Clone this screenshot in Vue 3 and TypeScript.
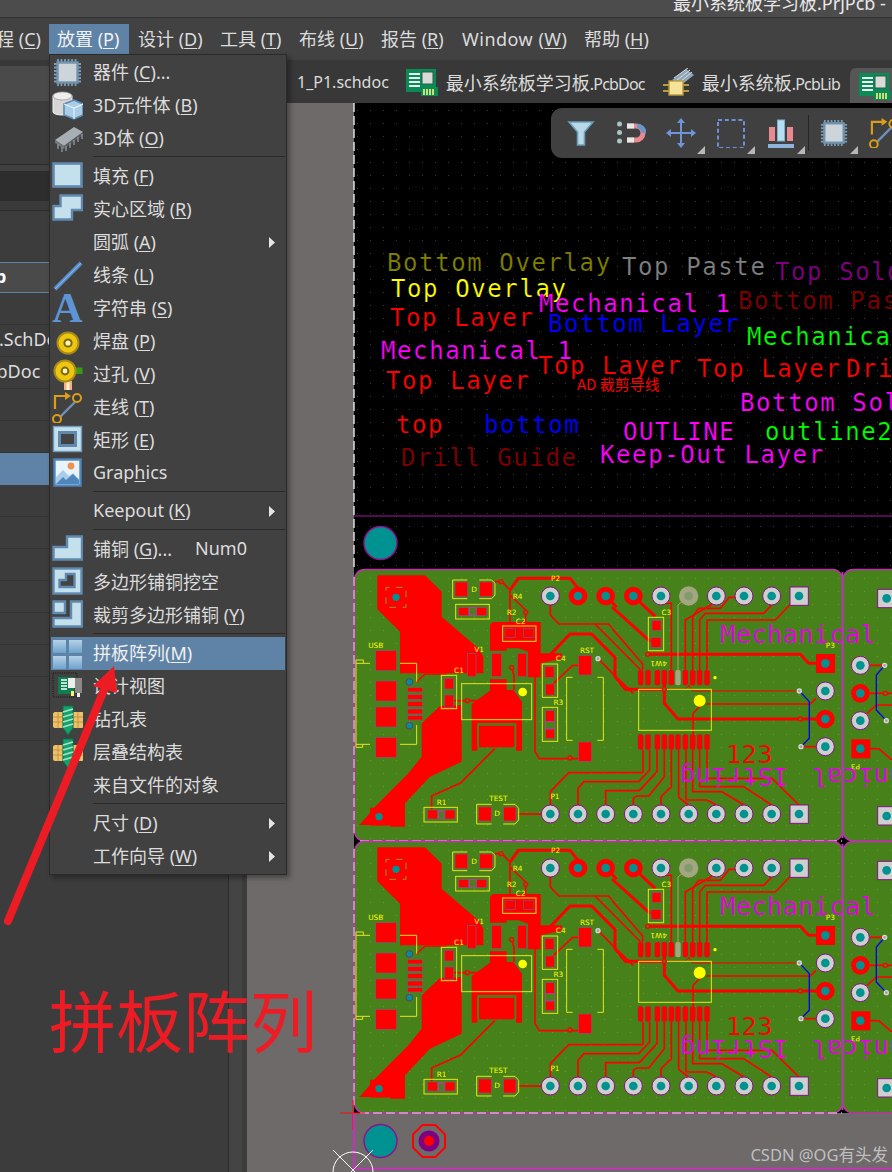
<script setup lang="ts">
interface MenuItem { sep?: boolean; icon?: string; a?: string; u?: string; b?: string; sub?: boolean; hot?: boolean; key?: string }

const menuBar = [
  { a: '程 (', u: 'C', b: ')', cls: 'first' },
  { a: '放置 (', u: 'P', b: ')', cls: 'open' },
  { a: '设计 (', u: 'D', b: ')', cls: '' },
  { a: '工具 (', u: 'T', b: ')', cls: '' },
  { a: '布线 (', u: 'U', b: ')', cls: '' },
  { a: '报告 (', u: 'R', b: ')', cls: '' },
  { a: 'Window (', u: 'W', b: ')', cls: 'wide' },
  { a: '帮助 (', u: 'H', b: ')', cls: '' }
]

const pinsH = 'M6 2V5M9.5 2V5M13 2V5M16.5 2V5M20 2V5M23.5 2V5M6 26V29M9.5 26V29M13 26V29M16.5 26V29M20 26V29M23.5 26V29M2 7V7M2 7H5M2 10.5H5M2 14H5M2 17.5H5M2 21H5M2 24.5H5M26 7H29M26 10.5H29M26 14H29M26 17.5H29M26 21H29M26 24.5H29'
const chip = `<path d="${pinsH}" stroke="#7c9db5" stroke-width="1.8" fill="none"/><rect x="5.5" y="5.5" width="20" height="20" fill="#cdd5db" stroke="#6f92ad" stroke-width="2.4"/>`

const icons: Record<string, string> = {
  chip,
  body3d: `<path d="M1 6C1 2 20 2 20 6V22C20 26 1 26 1 22Z" fill="#d6d6d6" stroke="#f2f2f2" stroke-width="1"/><ellipse cx="10.5" cy="6" rx="9.5" ry="4" fill="#eee" stroke="#9a9a9a" stroke-width=".8"/><path d="M12 14L22 10L31 14V25L22 29L12 25Z" fill="#a9cde6" stroke="#5d8bb0" stroke-width="1.6"/><path d="M12 14L22 18L31 14M22 18V29" fill="none" stroke="#e2f1fa" stroke-width="1.2"/>`,
  ic3d: `<path d="M3 17L22 4L31 9L12 23Z" fill="#a7aeb4"/><path d="M3 17L12 23V26L3 20Z" fill="#70767c"/><path d="M12 23L31 9V12L12 26Z" fill="#565c62"/><path d="M6 21V26M10 24V29M14 23V28M18 20V25M22 17V22M26 14V19M30 11V16" stroke="#8d949a" stroke-width="1.4" fill="none"/>`,
  fill: `<rect x="1.5" y="2.5" width="28" height="23" fill="#c3e0ec" stroke="#6189ae" stroke-width="2.6"/>`,
  region: `<path d="M8.5 1.5H30V16H20V25.5H1.5V12H8.5Z" fill="#c3e0ec" stroke="#6189ae" stroke-width="2.4"/>`,
  none: '',
  line: `<path d="M3 29L29 3" stroke="#5b90cf" stroke-width="4"/><path d="M3 29L29 3" stroke="#89b5e6" stroke-width="1"/>`,
  text: `<text x="15.5" y="29" class="ia">A</text>`,
  pad: `<circle cx="16" cy="17" r="10.5" fill="#edc70e" stroke="#a98b1c" stroke-width="2"/><circle cx="16" cy="17" r="3.6" fill="#fff3b0" stroke="#7b6414" stroke-width="2"/>`,
  via: `<rect x="22" y="8.5" width="8.5" height="6.5" fill="#3b9a12"/><rect x="12" y="22" width="8" height="9" fill="#eeb27a"/><rect x="14.5" y="22" width="3" height="9" fill="#fff0d8"/><circle cx="13" cy="12" r="10.5" fill="#edc70e" stroke="#a98b1c" stroke-width="2"/><circle cx="13" cy="12" r="3.4" fill="#fff3b0" stroke="#7b6414" stroke-width="2"/>`,
  route: `<path d="M3 17V4H14" fill="none" stroke="#dd9e17" stroke-width="2.2"/><path d="M13 0L19 4L13 8Z" fill="#dd9e17"/><path d="M8 25L23 10" stroke="#7091b8" stroke-width="2.4"/><circle cx="25" cy="6" r="4" fill="#3d3d3d" stroke="#dd9e17" stroke-width="2"/><circle cx="5" cy="27" r="4" fill="#3d3d3d" stroke="#dd9e17" stroke-width="2"/>`,
  rect: `<rect x="1.5" y="1.5" width="28" height="25" fill="#c3e0ec" stroke="#c3e0ec"/><rect x="1.5" y="1.5" width="28" height="25" fill="none" stroke="#6f9abd" stroke-width="1.4"/><rect x="7.5" y="7.5" width="16" height="13" fill="#434343" stroke="#6189ae" stroke-width="3"/>`,
  graphics: `<rect x="2.5" y="1.5" width="26" height="26" fill="#e8f3fb" stroke="#4f86bd" stroke-width="2.4"/><path d="M4 26V19L11 12L17 18L21 15L27 21V26Z" fill="#a8cde9"/><path d="M4 26L11 19L14 22L21 16L27 22V26Z" fill="#4f86bd"/><circle cx="19" cy="8" r="3.4" fill="#ea9450"/>`,
  poly: `<path d="M1.5 25.5V13H15V2.5H30V25.5Z" fill="#c3e0ec" stroke="#6189ae" stroke-width="2.4"/>`,
  cutout: `<rect x="1.5" y="1.5" width="28" height="25" fill="#c3e0ec" stroke="#6189ae" stroke-width="2.4"/><path d="M7.5 20V13H14V7H22.5V20Z" fill="#434343" stroke="#6189ae" stroke-width="2.4"/>`,
  slice: `<path d="M1.5 1.5H13V13H1.5Z" fill="#c3e0ec" stroke="#6189ae" stroke-width="2.4"/><path d="M19 1.5H30V26.5H1.5V18H19Z" fill="#c3e0ec" stroke="#6189ae" stroke-width="2.4"/>`,
  array: `<defs><linearGradient id="ag" x1="0" y1="0" x2="0" y2="1"><stop offset="0" stop-color="#b5d2e6"/><stop offset="1" stop-color="#6ea3cd"/></linearGradient></defs><rect x="1" y="2" width="13" height="13" fill="url(#ag)"/><rect x="17" y="2" width="13" height="13" fill="url(#ag)"/><rect x="1" y="18" width="13" height="13" fill="url(#ag)"/><rect x="17" y="18" width="13" height="13" fill="url(#ag)"/>`,
  view: `<rect x="1" y="2" width="24" height="24" fill="none" stroke="#111" stroke-dasharray="1 1.2"/><rect x="6" y="6" width="16" height="17" fill="#0d7d52"/><path d="M9 9H15M9 12H15M9 15H15M9 18H15" stroke="#fff" stroke-width="1.4"/><rect x="16" y="7" width="7" height="10" fill="#eee"/><rect x="23" y="7" width="7" height="15" fill="#8a8a8a"/><rect x="19" y="20" width="3" height="5" fill="#fff36a"/><rect x="25" y="22" width="3" height="4" fill="#eee"/>`,
  drill: `<path d="M3 8H30C31 8 31.500 9 31.500 10V22C31.500 23 31 24 30 24H3C2 24 1 23 1 22V10C1 9 2 8 3 8Z" fill="#eec169"/><path d="M1 13H31M1 18H31M6 8V24M11 8V24M21 8V24M26 8V24" stroke="#b88a3a" stroke-width=".8" fill="none"/><path d="M11 2H21V24L16 31L11 24Z" fill="#18a06c" stroke="#0d7048"/><path d="M11 8L21 5M11 13L21 10M11 18L21 15M11 23L21 20" stroke="#a3e6c8" stroke-width="1.4"/>`
}

const menu: MenuItem[] = [
  { icon: 'chip', a: '器件 (', u: 'C', b: ')...' },
  { icon: 'body3d', a: '3D元件体 (', u: 'B', b: ')' },
  { icon: 'ic3d', a: '3D体 (', u: 'O', b: ')' },
  { sep: true },
  { icon: 'fill', a: '填充 (', u: 'F', b: ')' },
  { icon: 'region', a: '实心区域 (', u: 'R', b: ')' },
  { icon: 'none', a: '圆弧 (', u: 'A', b: ')', sub: true },
  { icon: 'line', a: '线条 (', u: 'L', b: ')' },
  { icon: 'text', a: '字符串 (', u: 'S', b: ')' },
  { icon: 'pad', a: '焊盘 (', u: 'P', b: ')' },
  { icon: 'via', a: '过孔 (', u: 'V', b: ')' },
  { icon: 'route', a: '走线 (', u: 'T', b: ')' },
  { icon: 'rect', a: '矩形 (', u: 'E', b: ')' },
  { icon: 'graphics', a: 'Grap', u: 'h', b: 'ics' },
  { sep: true },
  { icon: 'none', a: 'Keepout (', u: 'K', b: ')', sub: true },
  { sep: true },
  { icon: 'poly', a: '铺铜 (', u: 'G', b: ')...', key: 'Num0' },
  { icon: 'cutout', a: '多边形铺铜挖空' },
  { icon: 'slice', a: '裁剪多边形铺铜 (', u: 'Y', b: ')' },
  { sep: true },
  { icon: 'array', a: '拼板阵列(', u: 'M', b: ')', hot: true },
  { icon: 'view', a: '设计视图' },
  { icon: 'drill', a: '钻孔表' },
  { icon: 'drill', a: '层叠结构表' },
  { icon: 'none', a: '来自文件的对象' },
  { sep: true },
  { icon: 'none', a: '尺寸 (', u: 'D', b: ')', sub: true },
  { icon: 'none', a: '工作向导 (', u: 'W', b: ')', sub: true }
]

const rowList = Array.from({ length: 14 }, (_, i) => i)

const legend = [
  { t: 'Bottom Overlay', x: 387, y: 271, c: '#808000' },
  { t: 'Top Paste', x: 622, y: 275, c: '#808080' },
  { t: 'Top Solder', x: 775, y: 280, c: '#800080' },
  { t: 'Top Overlay', x: 391, y: 297, c: '#ffff00' },
  { t: 'Mechanical 1', x: 539, y: 312, c: '#ff00ff' },
  { t: 'Bottom Paste', x: 738, y: 309, c: '#800000' },
  { t: 'Top Layer', x: 390, y: 326, c: '#ff0000' },
  { t: 'Bottom Layer', x: 548, y: 332, c: '#0000ff' },
  { t: 'Mechanical 2', x: 747, y: 345, c: '#00ff00' },
  { t: 'Mechanical 1', x: 381, y: 359, c: '#ff00ff' },
  { t: 'Top Layer', x: 538, y: 374, c: '#ff0000' },
  { t: 'Top Layer', x: 697, y: 377, c: '#ff0000' },
  { t: 'Drill Drawing', x: 846, y: 377, c: '#ff0000' },
  { t: 'Top Layer', x: 386, y: 389, c: '#ff0000' },
  { t: 'Bottom Solder', x: 740, y: 411, c: '#ff00ff' },
  { t: 'top', x: 396, y: 433, c: '#ff0000' },
  { t: 'bottom', x: 484, y: 433, c: '#0000ff' },
  { t: 'OUTLINE', x: 623, y: 440, c: '#ff00ff' },
  { t: 'outline2', x: 765, y: 440, c: '#00ff00' },
  { t: 'Drill Guide', x: 401, y: 466, c: '#800000' },
  { t: 'Keep-Out Layer', x: 600, y: 463, c: '#ff00ff' }
]

const boardRows = [0, 272]
const botPads = [0, 1, 2, 3, 4, 5, 6, 7, 8].map((k) => 601 + 83 * k)

const traces = [
  'M435 65H455L480 90V190', 'M480 105L527 150V190',
  'M601 135V165L627 192H735L786 243', 'M735 192H775L786 203',
  'M744 296L800 352L850 400', 'M600 380L668 316H685', 'M555 330V575L568 596H685', 'M300 422H400',
  'M245 750V708L333 668L435 565', 'M505 762H575', 'M601 735V695L656 638H840', 'M684 735V685L702 665H840',
  'M767 735V692H840', 'M485 323L492 345V390', 'M200 365L225 342H290'
]
const thick = ['M480 90L505 55H660L684 85', 'M600 285L660 222H725L795 292V350L826 388H840', 'M767 108L800 141']
const tracesR = [
  'M54 638H93V570', 'M54 665H80L113 630V570', 'M54 692H82L135 635V570', 'M64 735V715L75 708H110L157 650V570',
  'M147 735V710L178 680V570', 'M230 735L200 712V570', 'M313 735L285 720H222V570', 'M396 735L330 695H242V570',
  'M479 735L395 680H263V570', 'M561 735L480 655H285V570', 'M147 130H178V330', 'M313 125L220 180V330',
  'M396 112H352L325 145H260L242 170V330', 'M479 135L455 160H280L263 180V330', 'M561 108L533 135L490 180H285V330',
  'M0 205L92 312V330', 'M0 243L86 330', 'M283 432H595L612 415', 'M243 570V460L270 432', 'M612 560H570',
  'M774 316H818', 'M745 400H840', 'M765 460L793 435H840', 'M774 566H800L840 600'
]
const thickR = ['M0 141L115 245', 'M64 108L130 170', 'M40 388H155', 'M157 330V430L198 477H612', 'M107 283H565L590 310H612']
const thinR = 'M155 388H218L240 370M230 375L240 393H555'

const silk = [
  'M18 310H60M18 553H60M18 300H40V310M18 300V562H38V553M150 310H200V365M150 553H200V495',
  'M352 60H308V116H352M388 60H425L435 70V105L425 116H388',
  'M425 733H380V792H425M460 733H495L506 745V780L495 792H460',
  'M668 352H650V541H668M742 352H760V541H742'
]
const boxes = [
  [317, 133, 101, 44], [458, 198, 100, 46], [274, 346, 46, 100], [335, 371, 210, 108],
  [577, 312, 46, 100], [577, 442, 46, 102], [222, 742, 100, 44], [895, 172, 46, 100], [866, 388, 218, 123]
]
const smd = [
  [77, 272, 63, 60], [77, 363, 63, 60], [77, 441, 63, 60], [77, 532, 63, 60],
  [172, 403, 46, 15], [172, 425, 46, 15], [172, 447, 46, 15], [172, 383, 46, 13], [172, 467, 46, 13],
  [315, 66, 38, 44], [389, 66, 38, 44], [325, 142, 30, 25], [380, 142, 30, 25],
  [465, 205, 32, 27], [520, 205, 32, 27], [283, 355, 28, 32], [283, 405, 28, 37],
  [585, 320, 27, 32], [587, 372, 26, 33], [587, 452, 26, 33], [587, 507, 26, 28],
  [685, 287, 40, 58], [685, 546, 40, 58], [232, 750, 30, 27], [285, 750, 30, 27],
  [386, 741, 38, 42], [460, 741, 38, 42], [352, 280, 26, 70], [425, 280, 30, 70], [502, 280, 28, 70],
  [906, 182, 27, 30], [903, 233, 30, 29]
]
const mags = [[358, 142, 20, 25], [265, 752, 17, 23], [587, 485, 26, 22]]
const labels = [
  { t: 'P2', x: 617, y: 62 }, { t: 'R4', x: 503, y: 118 }, { t: 'R2', x: 485, y: 164 }, { t: 'C2', x: 512, y: 192 },
  { t: 'USB', x: 77, y: 265 }, { t: 'V1', x: 387, y: 277 }, { t: 'RST', x: 711, y: 280 }, { t: 'C4', x: 632, y: 304 },
  { t: 'C1', x: 327, y: 340 }, { t: 'R3', x: 625, y: 436 }, { t: 'P1', x: 615, y: 716 }, { t: 'TEST', x: 445, y: 722 },
  { t: 'R1', x: 275, y: 736 }, { t: 'C3', x: 949, y: 165 }, { t: 'P3', x: 1441, y: 265 }, { t: 'D', x: 372, y: 95 }, { t: 'D', x: 441, y: 769 }
]
const pinXs = [86, 108, 136, 157, 178, 220, 242, 263, 285]
</script>

<template>
  <div class="page">
    <div class="title"><span class="title-text">最小系统板学习板.PrjPcb -</span></div>
    <nav class="menubar">
      <div v-for="m in menuBar" :key="m.u" class="mb-item" :class="m.cls"><span>{{ m.a }}<u>{{ m.u }}</u>{{ m.b }}</span></div>
    </nav>

    <div class="body">
      <aside class="panel">
        <div class="p-a"></div>
        <div class="p-b"></div>
        <div class="p-c"></div>
        <div class="p-d"></div>
        <div class="p-e"></div>
        <div class="p-f"></div>
        <div class="p-g"></div>
        <div class="p-head"><span>p</span></div>
        <div v-for="r in rowList" :key="r" class="p-row" :class="{ sel: r === 5 }">
          <span v-if="r === 1" class="sch">板.SchDoc</span>
          <span v-if="r === 2" class="pcb">PcbDoc</span>
        </div>
      </aside>

      <div class="work">
        <div class="tabs">
          <div class="tab">1_P1.schdoc</div>
          <div class="tab">
            <svg class="tab-ic" viewBox="0 0 32 28"><rect x="0" y="1" width="30" height="23" fill="#0c8a55"/><path d="M3 6H14M3 10H14M3 14H14M3 18H14" stroke="#e9fff4" stroke-width="1.8"/><rect x="16" y="4" width="11" height="12" fill="#d9dbd9" stroke="#2c5a46"/><rect x="15" y="19" width="17" height="9" fill="#0c8a55"/><path d="M18 21V27M21 21V27M24 21V27M27 21V27" stroke="#fff27a" stroke-width="1.6"/></svg>
            <span class="tight"><b class="zh">最小系统板学习板</b>.PcbDoc</span>
          </div>
          <div class="tab">
            <svg class="tab-ic" viewBox="0 0 32 28"><path d="M10 12L24 1L32 7L18 18Z" fill="#8fa4b5"/><path d="M12 10L26 0M15 12L28 2M18 14L30 4" stroke="#d6e0e8" stroke-width="1"/><rect x="7" y="13" width="14" height="14" fill="#f7e29a" stroke="#b79a3e" stroke-width="1.4"/><path d="M1 17H7M1 23H7M21 17H27M21 23H27" stroke="#b79a3e" stroke-width="2"/></svg>
            <span class="tight"><b class="zh">最小系统板</b>.PcbLib</span>
          </div>
          <div class="tab active">
            <svg class="tab-ic" viewBox="0 0 32 28"><rect x="0" y="1" width="30" height="23" fill="#0c8a55"/><path d="M3 6H14M3 10H14M3 14H14M3 18H14" stroke="#e9fff4" stroke-width="1.8"/><rect x="16" y="4" width="11" height="12" fill="#d9dbd9" stroke="#2c5a46"/><rect x="15" y="19" width="17" height="9" fill="#0c8a55"/><path d="M18 21V27M21 21V27M24 21V27M27 21V27" stroke="#fff27a" stroke-width="1.6"/></svg>
          </div>
        </div>

        <div class="stage">
          <div class="strip"></div>
          <div class="canvas">
            <svg class="board" viewBox="247 103 645 1069">
              <defs>
                <pattern id="dotsK" x="0" y="0" width="13" height="13" patternUnits="userSpaceOnUse"><rect x="6" y="6" width="1" height="1" fill="#3a3a3a" /></pattern>
                <pattern id="dotsG" x="0" y="0" width="13" height="13" patternUnits="userSpaceOnUse"><rect x="6" y="6" width="1" height="1" fill="#5f9a38" /></pattern>
              </defs>
              <rect x="354" y="103" width="538" height="1010" fill="#000" />
              <rect x="354" y="103" width="538" height="466" fill="url(#dotsK)" />
              <path d="M354 516H892" stroke="#a01ca0" stroke-width="1.2" />
              <circle cx="380.500" cy="543" r="16.500" fill="#009291" stroke="#8a148c" stroke-width="1.500" />

              <text v-for="(l, i) in legend" :key="i" class="layer" :x="l.x" :y="l.y" :fill="l.c">{{ l.t }}</text>
              <text x="577" y="390" class="ad">AD 裁剪导线</text>

              <g v-for="dy in boardRows" :key="dy" :transform="`translate(0 ${dy})`">
                <rect x="354.500" y="569.500" width="488" height="271.500" rx="10" fill="#47811a" stroke="#c030b0" stroke-width="1.500" />
                <rect x="356" y="571" width="485" height="268" rx="9" fill="url(#dotsG)" />
                <rect x="843" y="569.500" width="60" height="271.500" rx="10" fill="#47811a" stroke="#c030b0" stroke-width="1.500" />
                <rect x="845" y="571" width="60" height="268" rx="9" fill="url(#dotsG)" />
                <path d="M842.500 572V838" stroke="#a8419e" stroke-width="2" />

                <g transform="translate(350 560) scale(.33333)">
                  <!-- copper pours -->
                  <g class="pour">
                    <polygon points="82,46 225,46 275,95 275,170 385,265 400,290 400,340 150,340 150,215 82,148" />
                    <polygon points="420,195 428,186 572,186 572,280 635,280 635,296 572,310 572,352 534,352 534,275 505,265 470,265 470,272 420,272" />
                    <polygon points="420,358 470,358 470,390 490,390 516,425 516,572 498,572 498,490 382,490 382,572 365,572 365,432 420,392" />
                    <polygon points="270,438 335,435 335,605 240,650 165,730 165,800 120,800 118,795 28,795 50,770 80,735 175,640 215,590 215,490" />
                    <rect x="387" y="497" width="106" height="65" />
                  </g>
                  <path class="gap" d="M383 560V492H497V560" />

                  <path v-for="(d, i) in traces" :key="i" class="trace" :d="d" />
                  <path v-for="(d, i) in thick" :key="'k' + i" class="trace t-thick" :d="d" />
                  <g transform="translate(786 0)">
                    <path v-for="(d, i) in tracesR" :key="'r' + i" class="trace" :d="d" />
                    <path v-for="(d, i) in thickR" :key="'q' + i" class="trace t-thick" :d="d" />
                    <path class="trace t-thin" :d="thinR" />
                  </g>
                  <path class="trace-gray" d="M1016 108L984 135V330" />
                  <path class="trace-blue" d="M1348 393L1378 425V535L1353 560" />
                  <path class="trace-blue" d="M1604 316L1579 345V450L1609 482" />

                  <rect v-for="(p, i) in smd" :key="i" class="smd" :x="p[0]" :y="p[1]" :width="p[2]" :height="p[3]" />
                  <rect v-for="(p, i) in mags" :key="'m' + i" class="mag" :x="p[0]" :y="p[1]" :width="p[2]" :height="p[3]" />
                  <rect v-for="(b, i) in boxes" :key="'b' + i" class="box" :x="b[0]" :y="b[1]" :width="b[2]" :height="b[3]" />
                  <path v-for="(d, i) in silk" :key="'s' + i" class="box" :d="d" />
                  <rect x="108" y="82" width="60" height="60" class="bracket" />

                  <circle cx="138" cy="112" r="11" class="hole" />
                  <rect x="60" y="743" width="55" height="54" fill="#f00" />
                  <circle cx="87" cy="770" r="11" class="hole" />
                  <circle cx="178" cy="366" r="10" class="hole viah" />
                  <circle cx="178" cy="497" r="10" class="hole viah" />

                  <circle v-for="v in [[453, 65], [527, 157], [352, 422], [485, 323], [660, 594], [893, 283], [943, 388], [1351, 477], [1606, 400]]" :key="'v' + v[0]" class="via" :cx="v[0]" :cy="v[1]" r="6" />
                  <circle v-for="v in [[744, 296], [1348, 393], [1353, 560], [1604, 316], [1609, 482]]" :key="'g' + v[0]" class="via-g" :cx="v[0]" :cy="v[1]" r="6" />

                  <!-- connector pads, top row -->
                  <g>
                    <circle cx="601" cy="108" r="27" class="pad-g" /><circle cx="601" cy="108" r="13" class="hole" />
                    <circle cx="684" cy="108" r="28" class="pad-r" /><circle cx="684" cy="108" r="13" class="hole" />
                    <circle cx="767" cy="108" r="28" class="pad-r" /><circle cx="767" cy="108" r="13" class="hole" />
                    <circle cx="850" cy="108" r="28" class="pad-r" /><circle cx="850" cy="108" r="13" class="hole" />
                    <circle cx="933" cy="108" r="27" class="pad-g" /><circle cx="933" cy="108" r="13" class="hole" />
                    <circle cx="1016" cy="108" r="29" fill="#a4a581" /><circle cx="1016" cy="108" r="13" fill="#869a6f" />
                    <circle cx="1099" cy="108" r="27" class="pad-g" /><circle cx="1099" cy="108" r="13" class="hole" />
                    <circle cx="1182" cy="108" r="27" class="pad-g" /><circle cx="1182" cy="108" r="13" class="hole" />
                    <circle cx="1265" cy="108" r="27" class="pad-g" /><circle cx="1265" cy="108" r="13" class="hole" />
                    <rect x="1320" y="81" width="55" height="55" class="pad-g" /><circle cx="1347" cy="108" r="13" class="hole" />
                  </g>
                  <!-- bottom row -->
                  <g>
                    <template v-for="x in botPads" :key="x">
                      <circle :cx="x" cy="762" r="27" class="pad-g" /><circle :cx="x" cy="762" r="13" class="hole" />
                    </template>
                    <rect x="1320" y="735" width="55" height="55" class="pad-g" /><circle cx="1347" cy="762" r="13" class="hole" />
                  </g>
                  <!-- IC pins -->
                  <rect v-for="x in pinXs" :key="'pt' + x" class="pin" :x="x + 786 - 8" y="330" width="16" height="46" rx="6" />
                  <rect x="976" y="330" width="16" height="46" rx="6" fill="#a4a581" />
                  <rect v-for="x in [...pinXs, 198]" :key="'pb' + x" class="pin" :x="x + 786 - 8" y="523" width="16" height="46" rx="6" />

                  <circle cx="1049" cy="422" r="18" fill="#ffff00" />
                  <circle cx="1095" cy="353" r="5" fill="#ffff00" />
                  <circle cx="518" cy="396" r="13" fill="#ffff00" />

                  <!-- right connector -->
                  <rect x="1398" y="282" width="57" height="57" class="pad-r" /><circle cx="1426" cy="310" r="13" class="hole" />
                  <circle cx="1426" cy="393" r="27" class="pad-g" /><circle cx="1426" cy="393" r="13" class="hole" />
                  <circle cx="1426" cy="477" r="28" class="pad-r" /><circle cx="1426" cy="477" r="13" class="hole" />
                  <circle cx="1426" cy="560" r="27" class="pad-g" /><circle cx="1426" cy="560" r="13" class="hole" />

                  <!-- neighbouring board -->
                  <rect x="1583" y="88" width="55" height="55" class="pad-g" /><circle cx="1610" cy="115" r="13" class="hole" />
                  <circle cx="1531" cy="316" r="27" class="pad-g" /><circle cx="1531" cy="316" r="13" class="hole" />
                  <circle cx="1531" cy="400" r="28" class="pad-r" /><circle cx="1531" cy="400" r="13" class="hole" />
                  <circle cx="1531" cy="482" r="27" class="pad-g" /><circle cx="1531" cy="482" r="13" class="hole" />
                  <rect x="1504" y="538" width="57" height="57" class="pad-r" /><circle cx="1531" cy="566" r="13" class="hole" />
                  <rect x="1583" y="740" width="55" height="55" class="pad-g" /><circle cx="1610" cy="768" r="13" class="hole" />

                  <text v-for="(l, i) in labels" :key="'l' + i" class="tiny" :x="l.x" :y="l.y">{{ l.t }}</text>
                  <text class="tiny" transform="translate(1516 612) rotate(180)" x="0" y="0">P3</text>
                  <text class="tiny" transform="translate(926 304) rotate(180)" x="0" y="0">4W1</text>

                  <text class="big mech" x="1111" y="248">Mechanical</text>
                  <text class="big red" x="1128" y="608">123</text>
                  <text class="big mech" transform="translate(1316 624) rotate(180)">1String</text>
                  <text class="big mech" transform="translate(1851 624) rotate(180)">Mechanical</text>
                </g>

                <path d="M354 577V833" class="dash" />
                <path d="M360 841H842" class="dash" />
              </g>
              <path d="M354 103V569" class="dash dash-w" />

              <!-- below the boards -->
              <path d="M340 1113H365M353 1100V1130" stroke="#f01010" stroke-width="1" />
              <path d="M354 1113V1172M354 1168.500H892" stroke="#e020d8" stroke-width="1.600" />
              <circle cx="380.500" cy="1141" r="16.500" fill="#009291" stroke="#8a148c" stroke-width="1.500" />
              <polygon points="422.500,1125 435.500,1125 445,1134.500 445,1147.500 435.500,1157 422.500,1157 413,1147.500 413,1134.500" fill="none" stroke="#f00" stroke-width="2" />
              <circle cx="429" cy="1141" r="10.500" fill="#800080" />
              <circle cx="429" cy="1141" r="5" fill="#f00" />
              <circle cx="353" cy="1172" r="20" fill="none" stroke="#fff" stroke-width="1" />
              <path d="M333 1150L373 1190M373 1150L333 1190" stroke="#fff" stroke-width="1" />
            </svg>

            <div class="tools">
              <div class="tool">
                <svg viewBox="0 0 30 30"><path d="M3 4H27L18.500 14V27H11.500V14Z" fill="#b7d9e8" stroke="#6d9cb8" stroke-width="1.600" /></svg>
              </div>
              <div class="tool">
                <svg viewBox="0 0 30 30"><circle cx="3.500" cy="6" r="2.500" fill="#a9c4c4" /><circle cx="3.500" cy="14.500" r="2.500" fill="#a9c4c4" /><circle cx="3.500" cy="23" r="2.500" fill="#a9c4c4" /><path d="M11 8H20A7 7 0 0 1 20 22H11" fill="none" stroke="#e88a8f" stroke-width="5" /><path d="M11 8H18M11 22H18" stroke="#e8e8e8" stroke-width="5" /><path d="M21 8A7 7 0 0 1 21 22" fill="none" stroke="#6f94c8" stroke-width="5" stroke-dasharray="11 30"/></svg>
              </div>
              <div class="tool corner">
                <svg viewBox="0 0 30 30"><path d="M15 2V28M2 15H28" stroke="#6f94d8" stroke-width="2" /><path d="M15 0L19 5H11ZM15 30L11 25H19ZM0 15L5 11V19ZM30 15L25 19V11Z" fill="#6f94d8" /></svg>
              </div>
              <div class="tool corner">
                <svg viewBox="0 0 30 30"><rect x="2" y="2" width="26" height="28" fill="none" stroke="#6f8fd8" stroke-width="2" stroke-dasharray="4 2.800" /></svg>
              </div>
              <div class="tool corner">
                <svg viewBox="0 0 30 30"><rect x="3" y="9" width="6" height="14" fill="#e88a8f" /><rect x="11.500" y="2" width="7" height="21" fill="#b5def0" stroke="#7ab0d0" /><rect x="21" y="9" width="6" height="14" fill="#e88a8f" /><rect x="2" y="26" width="26" height="4" fill="#8fb4dc" /></svg>
              </div>
              <div class="tool-sep"></div>
              <div class="tool corner">
                <svg viewBox="0 0 31 31" v-html="icons.chip"></svg>
              </div>
              <div class="tool">
                <svg viewBox="0 0 31 31" v-html="icons.route"></svg>
              </div>
            </div>

            <div class="mark">CSDN @OG有头发</div>
          </div>
        </div>
      </div>
    </div>

    <!-- open dropdown -->
    <div class="menu">
      <template v-for="(m, i) in menu" :key="i">
        <div v-if="m.sep" class="sep"></div>
        <div v-else class="item" :class="{ hot: m.hot }">
          <svg class="ic" viewBox="0 0 31 31" v-html="icons[m.icon || 'none']"></svg>
          <span class="lbl" :class="{ haskey: m.key }">{{ m.a }}<u v-if="m.u">{{ m.u }}</u>{{ m.b }}</span>
          <span v-if="m.key" class="key">{{ m.key }}</span>
          <i v-if="m.sub" class="arrow"></i>
        </div>
      </template>
    </div>

    <!-- red annotation -->
    <svg class="note" viewBox="0 0 892 1172">
      <path d="M8 921L104 690" stroke="#ed1c24" stroke-width="8" stroke-linecap="round" />
      <polygon points="114,666 93,686 117,693" fill="#ed1c24" />
    </svg>
    <div class="note-text">拼板阵列</div>
  </div>
</template>

<style>
html, body { margin: 0; background: #3c3c3c; overflow: hidden; }
.ia { font-family: "Liberation Serif", serif; font-weight: 700; font-size: 42px; fill: #5d95d6; text-anchor: middle; }
</style>

<style scoped>
.page {
  position: relative;
  width: 892px;
  height: 1172px;
  overflow: hidden;
  display: flex;
  flex-direction: column;
  background: #3c3c3c;
  color: #dcdcdc;
  font-family: "Noto Sans", "Noto Sans CJK SC", sans-serif;
  font-size: 18px;
}
u { text-underline-offset: 2px; text-decoration-thickness: 1px; }

.title {
  height: 17px;
  flex: none;
  background: #4c4c4c;
  border-bottom: 1px solid #303030;
  padding-left: 673px;
  overflow: hidden;
}
.title-text { display: block; margin-top: -10px; line-height: 26px; color: #e8e8e8; white-space: nowrap; }

.menubar {
  height: 42px;
  flex: none;
  background: #424242;
  display: grid;
  grid-template-columns: 49px 81px 82px 79px 82px 81px 122px auto;
  box-sizing: border-box;
  padding-top: 6px;
}
.mb-item { height: 30px; line-height: 30px; padding-left: 8px; white-space: nowrap; }
.mb-item.first { padding: 0 8px 0 0; display: flex; justify-content: flex-end; overflow: hidden; }
.mb-item.first span { flex: none; }
.mb-item.open { background: #5f83a6; color: #f2f2f2; width: 80px; box-sizing: border-box; }
.mb-item.wide { letter-spacing: 0.5px; }

.body { flex: 1; display: flex; min-height: 0; }

.panel { width: 228px; flex: none; background: #3c3c3c; border-right: 1px solid #2b2b2b; overflow: hidden; }
.p-a { height: 6px; background: #383838; }
.p-b { height: 35px; background: #4a4a4a; }
.p-c { height: 63px; background: #3c3c3c; border-bottom: 1px solid #2a2a2a; }
.p-d { height: 6px; background: #404040; }
.p-e { height: 30px; background: #2d2d2d; }
.p-f { height: 9px; background: #3a3a3a; border-bottom: 1px solid #2c2c2c; }
.p-g { height: 51px; }
.p-head {
  height: 29px;
  background: #4a4a4a;
  border-top: 1px solid #5f83a6;
  border-bottom: 1px solid #5f83a6;
  line-height: 26px;
  font-weight: 700;
  color: #fff;
}
.p-head span { display: block; margin-left: -5px; }
.p-row { height: 31px; border-bottom: 1px solid #333; line-height: 28px; white-space: nowrap; overflow: hidden; }
.p-row.sel { background: #5f83a6; border-bottom-color: #5f83a6; }
.sch { display: block; margin-left: -19px; }
.pcb { display: block; margin-left: -23px; }

.work { flex: 1; display: flex; flex-direction: column; min-width: 0; }
.tabs {
  height: 43px;
  flex: none;
  background: #383838;
  display: flex;
  align-items: center;
  padding-left: 68px;
  gap: 17px;
  white-space: nowrap;
  overflow: hidden;
  font-size: 16px;
}
.tight { letter-spacing: -0.8px; }
.zh { font-weight: 400; font-size: 18px; letter-spacing: 0; }
.tab { display: flex; align-items: center; gap: 8px; flex: none; }
.tab-ic { width: 32px; height: 28px; flex: none; }
.tab.active { align-self: flex-end; height: 35px; padding: 0 40px 0 9px; background: #565656; border-radius: 6px 6px 0 0; margin-left: -7px; }

.stage { flex: 1; display: flex; min-height: 0; }
.strip { width: 18px; flex: none; background: linear-gradient(90deg, #444 0 13px, #3c3c3c 13px); }
.canvas { position: relative; flex: 1; background: #6e6a6a; overflow: hidden; }
.board { position: absolute; inset: 0; width: 645px; height: 1069px; display: block; }

.layer { font-family: "DejaVu Sans Mono", monospace; font-size: 24px; letter-spacing: 1.6px; stroke: #000; stroke-width: 0.2px; }
.ad { font-family: "Noto Sans CJK SC", sans-serif; font-size: 15px; fill: #f00; }
.pour { fill: #f00; }
.gap { fill: none; stroke: #47811a; stroke-width: 4; }
.trace { fill: none; stroke: #f00; stroke-width: 5; stroke-linejoin: round; }
.t-thin { stroke-width: 3; }
.t-thick { stroke-width: 9; }
.trace-gray { fill: none; stroke: #a4a581; stroke-width: 3; }
.trace-blue { fill: none; stroke: #0000f0; stroke-width: 4; }
.smd { fill: #f00; stroke: #7a5a7a; stroke-width: 2; }
.mag { fill: #47811a; stroke: #e020e0; stroke-width: 2; }
.box { fill: none; stroke: #e6e61e; stroke-width: 3; }
.bracket { fill: none; stroke: #8c9a20; stroke-width: 3; stroke-dasharray: 20 20; stroke-dashoffset: 10; }
.hole { fill: #009291; }
.viah { stroke: #87108a; stroke-width: 2; }
.via { fill: #47811a; stroke: #f00; stroke-width: 4; }
.via-g { fill: #a0a0a0; stroke: #d8d8d8; stroke-width: 4; }
.pad-g { fill: #cfcfcf; stroke: #87108a; stroke-width: 3; }
.pad-r { fill: #f00; }
.pin { fill: #f00; stroke: #8a3a4a; stroke-width: 1; }
.tiny { font-family: "DejaVu Sans", sans-serif; font-size: 22px; fill: #ffff00; text-anchor: middle; }
.big { font-family: "DejaVu Sans Mono", monospace; font-size: 76px; letter-spacing: 1px; font-weight: 400; stroke: #47811a; stroke-width: 0.600px; }
.mech { fill: #e800e8; }
.red { fill: #f00; }
.dash { fill: none; stroke: #e0a0e0; stroke-width: 1.4; stroke-dasharray: 9 4; }
.dash-w { stroke: #e8e8e8; }

.tools {
  position: absolute;
  left: 304px;
  top: 5px;
  width: 400px;
  height: 50px;
  padding-left: 5px;
  box-sizing: border-box;
  background: #404040;
  border-radius: 11px;
  display: flex;
  align-items: center;
}
.tool { position: relative; width: 50px; height: 50px; flex: none; display: flex; align-items: center; justify-content: center; }
.tool svg { width: 30px; height: 30px; }
.tool.corner::after {
  content: "";
  position: absolute;
  right: 1px;
  bottom: 4px;
  width: 8px;
  height: 8px;
  background: #b8b8b8;
  clip-path: polygon(100% 0, 100% 100%, 0 100%);
}
.tool-sep { width: 1px; height: 36px; background: #262626; margin-left: 2px; flex: none; }
.mark { position: absolute; right: 4px; bottom: 7px; color: #bfbfbf; font-size: 16.5px; line-height: 20px; white-space: nowrap; }

.menu {
  position: absolute;
  left: 49px;
  top: 54px;
  width: 238px;
  box-sizing: border-box;
  padding: 1px;
  background: #414141;
  border: 1px solid #2a2a2a;
  box-shadow: 3px 3px 5px rgba(0, 0, 0, 0.35);
}
.item { position: relative; height: 33px; display: flex; align-items: center; white-space: nowrap; }
.item.hot { background: #5f83a6; margin: 0; color: #f0f0f0; }
.ic { width: 31px; height: 31px; margin-left: 1px; flex: none; }
.lbl { margin: 0 0 4px 10px; }
.key { margin-bottom: 4px; }
.lbl.haskey { width: 102px; flex: none; }
.arrow {
  position: absolute;
  left: 218px;
  top: 11px;
  width: 6px;
  height: 11px;
  background: #e6e6e6;
  clip-path: polygon(0 0, 100% 50%, 0 100%);
}
.sep { height: 5px; position: relative; }
.sep::before { content: ""; position: absolute; left: 42px; right: 0; top: 1px; height: 1px; background: #2a2a2a; }

.note { position: absolute; inset: 0; width: 892px; height: 1172px; pointer-events: none; }
.note-text {
  position: absolute;
  left: 49px;
  top: 968px;
  font-family: "Noto Sans CJK SC", sans-serif;
  font-size: 67px;
  line-height: 100px;
  color: #ed1c24;
  white-space: nowrap;
}
</style>
